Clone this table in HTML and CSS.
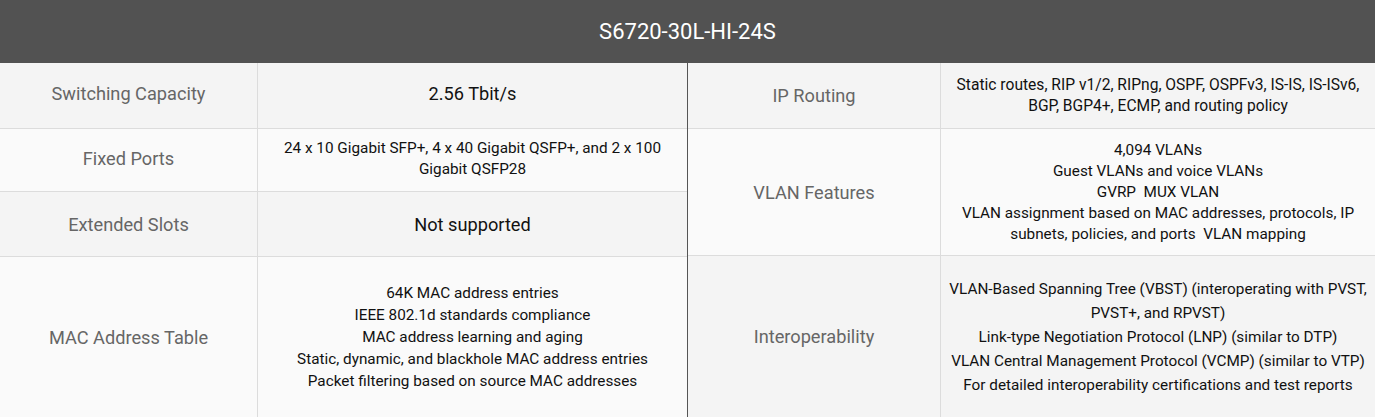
FILE: index.html
```html
<!DOCTYPE html>
<html>
<head>
<meta charset="utf-8">
<link rel="stylesheet" href="styles.css">
</head>
<body>
<div class="spec">
  <div class="spec-head">S6720-30L-HI-24S</div>
  <div class="spec-body">
    <div class="half half-left">
      <div class="cell label r1 dark">Switching Capacity</div>
      <div class="cell value big r1 dark">2.56 Tbit/s</div>
      <div class="cell label r2 light">Fixed Ports</div>
      <div class="cell value r2 light">24 x 10 Gigabit SFP+, 4 x 40 Gigabit QSFP+, and 2 x 100<br>Gigabit QSFP28</div>
      <div class="cell label r3 dark">Extended Slots</div>
      <div class="cell value big r3 dark">Not supported</div>
      <div class="cell label r4 light">MAC Address Table</div>
      <div class="cell value list-mac r4 light">64K MAC address entries<br>IEEE 802.1d standards compliance<br>MAC address learning and aging<br>Static, dynamic, and blackhole MAC address entries<br>Packet filtering based on source MAC addresses</div>
    </div>
    <div class="half half-right">
      <div class="cell label q1 dark">IP Routing</div>
      <div class="cell value wide q1 dark">Static routes, RIP v1/2, RIPng, OSPF, OSPFv3, IS-IS, IS-ISv6,<br>BGP, BGP4+, ECMP, and routing policy</div>
      <div class="cell label q2 light">VLAN Features</div>
      <div class="cell value q2 light">4,094 VLANs<br>Guest VLANs and voice VLANs<br>GVRP&nbsp; MUX VLAN<br>VLAN assignment based on MAC addresses, protocols, IP<br>subnets, policies, and ports&nbsp; VLAN mapping</div>
      <div class="cell label q3 dark">Interoperability</div>
      <div class="cell value list-int q3 dark">VLAN-Based Spanning Tree (VBST) (interoperating with PVST,<br>PVST+, and RPVST)<br>Link-type Negotiation Protocol (LNP) (similar to DTP)<br>VLAN Central Management Protocol (VCMP) (similar to VTP)<br>For detailed interoperability certifications and test reports</div>
    </div>
  </div>
</div>
</body>
</html>
```
FILE: styles.css
```css
html, body {
  margin: 0;
  padding: 0;
  background: #fafafa;
}
body {
  font-family: Roboto, "Liberation Sans", sans-serif;
  width: 1375px;
  height: 417px;
  overflow: hidden;
}
.spec-head {
  height: 63px;
  background: #525252;
  color: #ffffff;
  font-size: 22px;
  display: flex;
  align-items: center;
  justify-content: center;
}
.spec-body {
  display: flex;
  height: 354px;
}
.half {
  display: grid;
  width: 687px;
}
.half-left {
  grid-template-columns: 258px 429px;
  grid-template-rows: 66px 63px 65px 1fr;
  border-right: 1px solid #555555;
}
.half-right {
  grid-template-columns: 253px 434px;
  grid-template-rows: 66px 127px 1fr;
}
.cell {
  display: flex;
  align-items: center;
  justify-content: center;
  text-align: center;
  border-bottom: 1px solid #dcdcdc;
  box-sizing: border-box;
}
.label {
  border-right: 1px solid #dcdcdc;
  color: #666666;
  font-size: 18.2px;
}
.value {
  color: #111111;
  font-size: 15.3px;
  line-height: 21px;
}
.value.wide {
  font-size: 15.6px;
}
.value.big {
  font-size: 18.2px;
}
.r1 {
  padding-bottom: 5px;
}
.r2 {
  padding-bottom: 3px;
}
.list-mac {
  line-height: 22px;
}
.list-int {
  line-height: 24px;
}
.dark { background: #f4f4f4; }
.light { background: #fafafa; }
.r4, .q3 { border-bottom: none; }
```
